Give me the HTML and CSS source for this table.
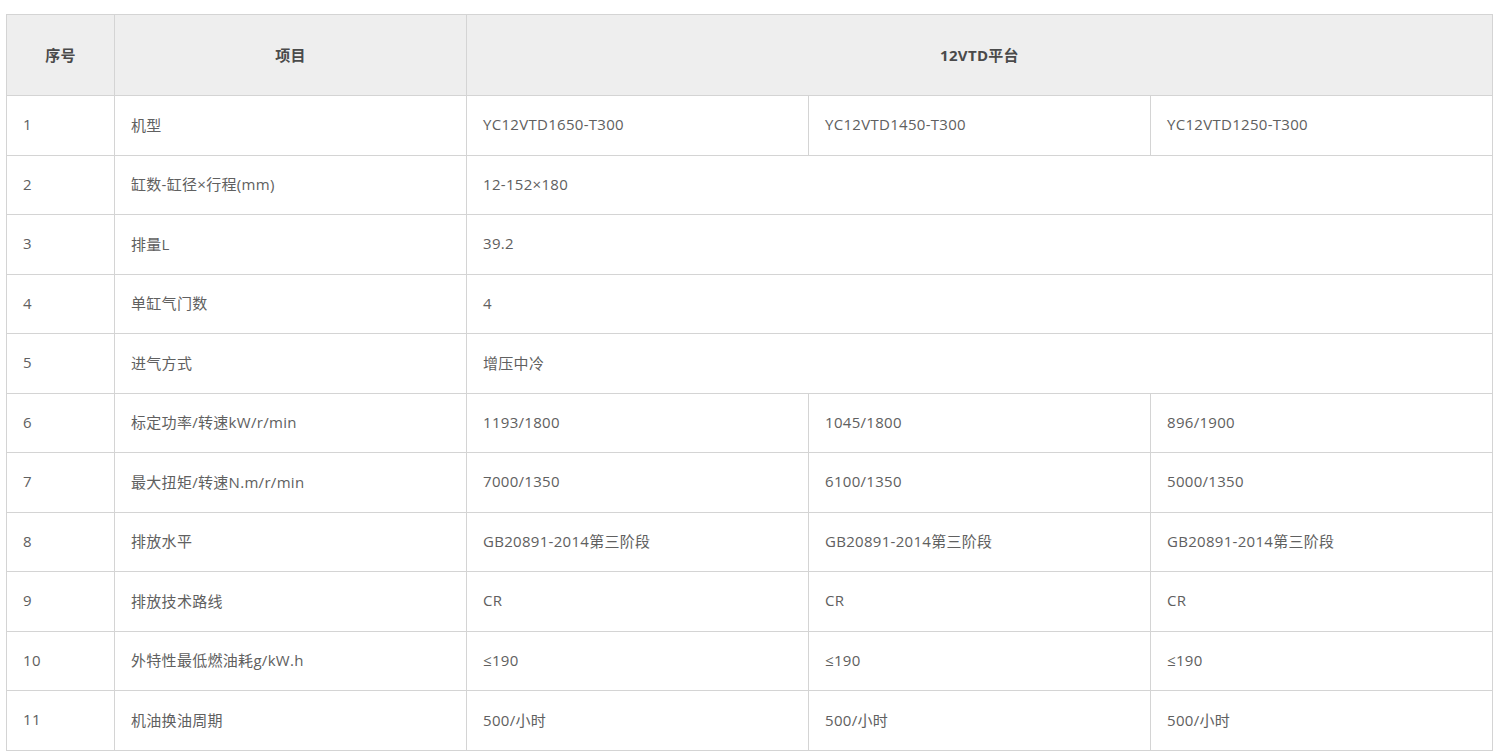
FILE: index.html
```html
<!DOCTYPE html>
<html lang="zh-CN">
<head>
<meta charset="utf-8">
<title>12VTD平台</title>
<link rel="stylesheet" href="styles.css">
</head>
<body>
<div class="wrap">
<table class="spec">
  <colgroup>
    <col class="c-no"><col class="c-item"><col class="c-val"><col class="c-val"><col class="c-val">
  </colgroup>
  <thead>
    <tr><th>序号</th><th>项目</th><th colspan="3">12VTD平台</th></tr>
  </thead>
  <tbody>
    <tr><td>1</td><td>机型</td><td>YC12VTD1650-T300</td><td>YC12VTD1450-T300</td><td>YC12VTD1250-T300</td></tr>
    <tr><td>2</td><td>缸数-缸径×行程(mm)</td><td colspan="3">12-152×180</td></tr>
    <tr><td>3</td><td>排量L</td><td colspan="3">39.2</td></tr>
    <tr><td>4</td><td>单缸气门数</td><td colspan="3">4</td></tr>
    <tr><td>5</td><td>进气方式</td><td colspan="3">增压中冷</td></tr>
    <tr><td>6</td><td>标定功率/转速kW/r/min</td><td>1193/1800</td><td>1045/1800</td><td>896/1900</td></tr>
    <tr><td>7</td><td>最大扭矩/转速N.m/r/min</td><td>7000/1350</td><td>6100/1350</td><td>5000/1350</td></tr>
    <tr><td>8</td><td>排放水平</td><td>GB20891-2014第三阶段</td><td>GB20891-2014第三阶段</td><td>GB20891-2014第三阶段</td></tr>
    <tr><td>9</td><td>排放技术路线</td><td>CR</td><td>CR</td><td>CR</td></tr>
    <tr><td>10</td><td>外特性最低燃油耗g/kW.h</td><td>≤190</td><td>≤190</td><td>≤190</td></tr>
    <tr><td>11</td><td>机油换油周期</td><td>500/小时</td><td>500/小时</td><td>500/小时</td></tr>
  </tbody>
</table>
</div>
</body>
</html>
```
FILE: styles.css
```css
html, body {
  margin: 0;
  padding: 0;
  background: #fff;
}
.wrap {
  padding: 14px 0 0 6px;
}
.spec {
  width: 1487px;
  border-collapse: collapse;
  table-layout: fixed;
  font-family: "Open Sans", "Noto Sans CJK SC", sans-serif;
  font-size: 15px;
  letter-spacing: 0.3px;
  color: #606060;
}
.c-no { width: 108px; }
.c-item { width: 352px; }
.c-val { width: 342px; }
.spec th, .spec td {
  border: 1px solid #d4d4d4;
  vertical-align: middle;
  padding: 0 16px 2px;
  text-align: left;
  font-weight: normal;
}
.spec th {
  background: #eee;
  height: 78px;
  text-align: center;
  font-weight: bold;
  color: #4a4a4a;
}
.spec td {
  height: 56.5px;
}
```
